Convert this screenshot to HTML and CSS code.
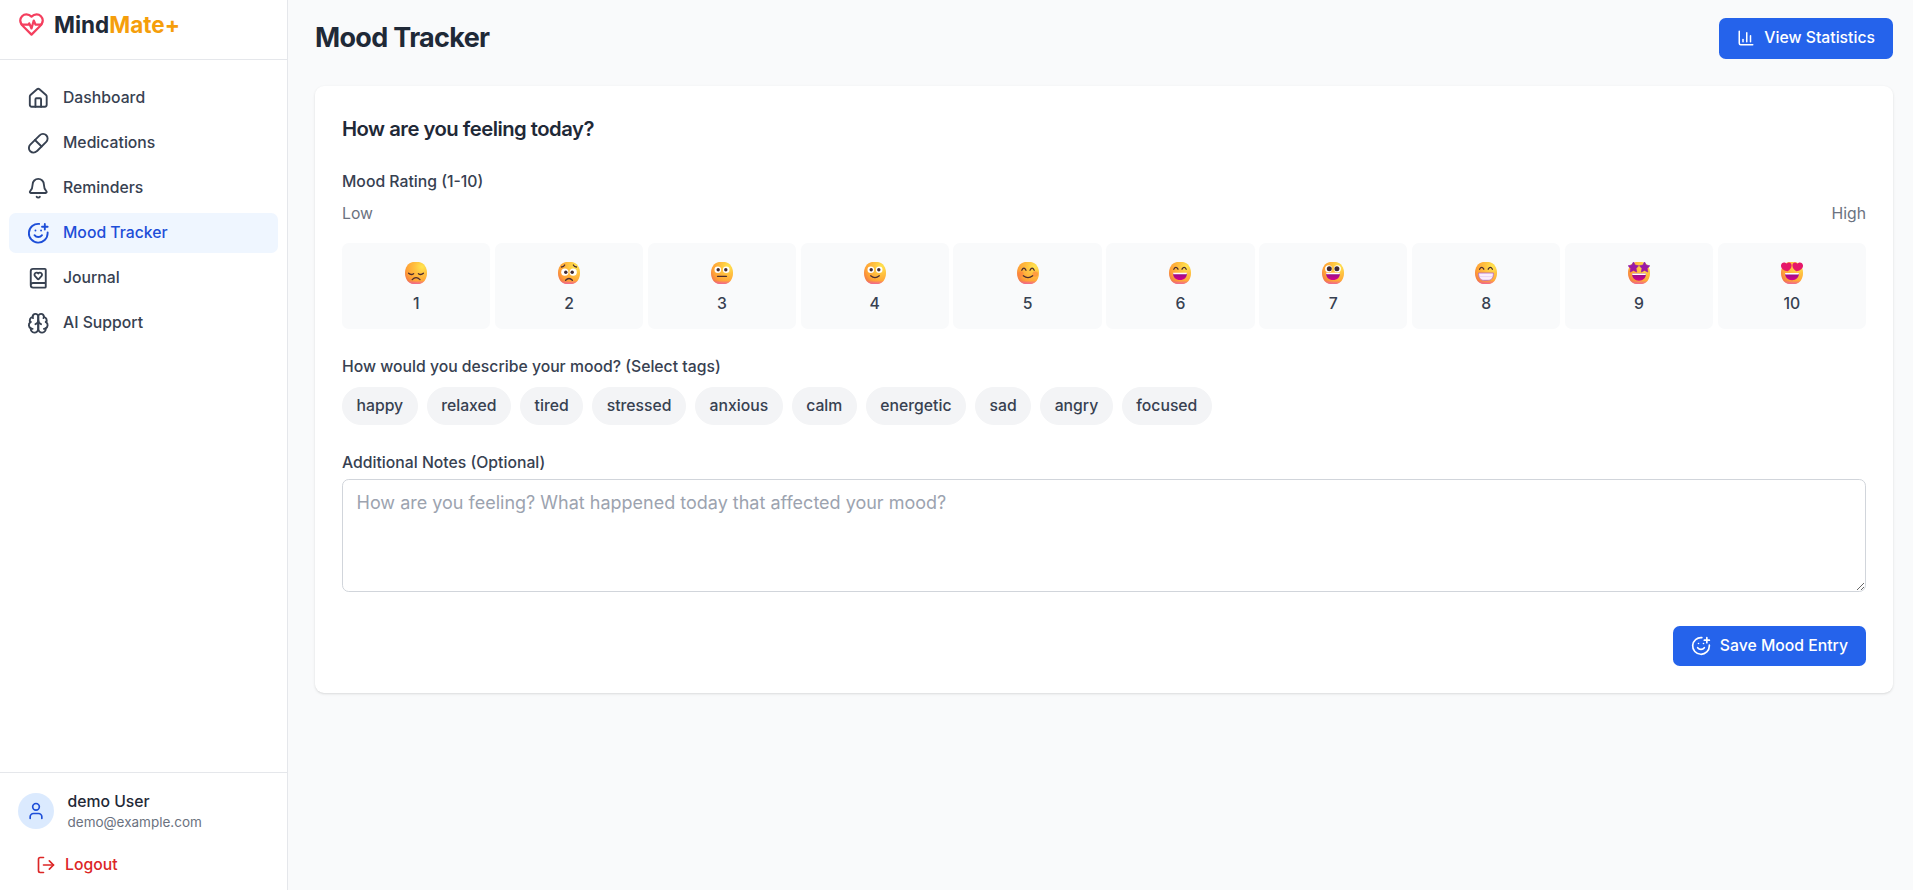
FILE: index.html
```html
<!DOCTYPE html>
<html lang="en">
<head>
<meta charset="utf-8">
<title>MindMate+</title>
<link rel="stylesheet" href="styles.css">
</head>
<body>
<svg class="defs" aria-hidden="true">
  <defs>
    <radialGradient id="skin" cx="0.78" cy="0.22" r="0.95">
      <stop offset="0" stop-color="#ffe550"/>
      <stop offset="0.35" stop-color="#ffc240"/>
      <stop offset="0.75" stop-color="#ffa136"/>
      <stop offset="1" stop-color="#f0724a"/>
    </radialGradient>
    <linearGradient id="blush" x1="0" y1="0" x2="0" y2="1">
      <stop offset="0.84" stop-color="#f0649c" stop-opacity="0"/>
      <stop offset="1" stop-color="#f0649c" stop-opacity="0.9"/>
    </linearGradient>
    <linearGradient id="mouth" x1="0" y1="0" x2="0" y2="1">
      <stop offset="0" stop-color="#8a1288"/>
      <stop offset="1" stop-color="#d8008c"/>
    </linearGradient>
    <linearGradient id="star" x1="0" y1="0" x2="0" y2="1">
      <stop offset="0" stop-color="#8c1fb0"/>
      <stop offset="1" stop-color="#a8129a"/>
    </linearGradient>
    <symbol id="face" viewBox="0 0 22 22">
      <path d="M8 0h6c5 1 8 5 8 11s-3 10-8 11H8c-5-1-8-5-8-11S3 1 8 0z" fill="url(#skin)"/>
      <path d="M8 0h6c5 1 8 5 8 11s-3 10-8 11H8c-5-1-8-5-8-11S3 1 8 0z" fill="url(#blush)"/>
    </symbol>
    <symbol id="smile-plus" viewBox="0 0 24 24">
      <path d="M22 11v1a10 10 0 1 1-9-10"/><path d="M8 14s1.500 2 4 2 4-2 4-2"/><path d="M9 9h.01"/><path d="M15 9h.01"/><path d="M16 5h6"/><path d="M19 2v6"/>
    </symbol>
  </defs>
</svg>
<div class="app">
  <aside class="sidebar">
    <div class="brand">
      <svg class="icon brand-icon" viewBox="0 0 24 24"><path d="M19 14c1.490-1.460 3-3.210 3-5.500A5.500 5.500 0 0 0 16.500 3c-1.760 0-3 .5-4.500 2-1.500-1.500-2.740-2-4.500-2A5.500 5.500 0 0 0 2 8.500c0 2.300 1.500 4.050 3 5.500l7 7Z"/><path d="M3.220 12H9.500l.5-1 2 4.500 2-7 1.500 3.500h5.270"/></svg>
      <span class="brand-name">Mind<span class="brand-accent">Mate+</span></span>
    </div>
    <nav class="nav">
      <a class="nav-item"><svg class="icon" viewBox="0 0 24 24"><path d="M15 21v-8a1 1 0 0 0-1-1h-4a1 1 0 0 0-1 1v8"/><path d="M3 10a2 2 0 0 1 .709-1.528l7-5.999a2 2 0 0 1 2.582 0l7 5.999A2 2 0 0 1 21 10v9a2 2 0 0 1-2 2H5a2 2 0 0 1-2-2z"/></svg>Dashboard</a>
      <a class="nav-item"><svg class="icon" viewBox="0 0 24 24"><path d="m10.500 20.500 10-10a4.950 4.950 0 1 0-7-7l-10 10a4.950 4.950 0 1 0 7 7Z"/><path d="m8.500 8.500 7 7"/></svg>Medications</a>
      <a class="nav-item"><svg class="icon" viewBox="0 0 24 24"><path d="M10.268 21a2 2 0 0 0 3.464 0"/><path d="M3.262 15.326A1 1 0 0 0 4 17h16a1 1 0 0 0 .74-1.673C19.410 13.956 18 12.499 18 8A6 6 0 0 0 6 8c0 4.499-1.411 5.956-2.738 7.326"/></svg>Reminders</a>
      <a class="nav-item active"><svg class="icon"><use href="#smile-plus"/></svg>Mood Tracker</a>
      <a class="nav-item"><svg class="icon" viewBox="0 0 24 24"><path d="M4 19.500v-15A2.500 2.500 0 0 1 6.500 2H19a1 1 0 0 1 1 1v18a1 1 0 0 1-1 1H6.500a1 1 0 0 1 0-5H20"/><path d="M8.620 9.800A2.250 2.250 0 1 1 12 6.836a2.250 2.250 0 1 1 3.380 2.966l-2.626 2.856a1 1 0 0 1-1.507 0z"/></svg>Journal</a>
      <a class="nav-item"><svg class="icon" viewBox="0 0 24 24"><path d="M12 5a3 3 0 1 0-5.997.125 4 4 0 0 0-2.526 5.770 4 4 0 0 0 .556 6.588A4 4 0 1 0 12 18Z"/><path d="M12 5a3 3 0 1 1 5.997.125 4 4 0 0 1 2.526 5.770 4 4 0 0 1-.556 6.588A4 4 0 1 1 12 18Z"/><path d="M15 13a4.500 4.500 0 0 1-3-4 4.500 4.500 0 0 1-3 4"/><path d="M17.599 6.500a3 3 0 0 0 .399-1.375"/><path d="M6.003 5.125A3 3 0 0 0 6.401 6.500"/><path d="M3.477 10.896a4 4 0 0 1 .585-.396"/><path d="M19.938 10.500a4 4 0 0 1 .585.396"/><path d="M6 18a4 4 0 0 1-1.967-.516"/><path d="M19.967 17.484A4 4 0 0 1 18 18"/></svg>AI Support</a>
    </nav>
    <div class="account">
      <div class="user">
        <span class="avatar"><svg class="icon icon-20" viewBox="0 0 24 24"><path d="M19 21v-2a4 4 0 0 0-4-4H9a4 4 0 0 0-4 4v2"/><circle cx="12" cy="7" r="4"/></svg></span>
        <div class="user-text"><p class="user-name">demo User</p><p class="user-mail">demo@example.com</p></div>
      </div>
      <button class="logout"><svg class="icon icon-20" viewBox="0 0 24 24"><path d="M9 21H5a2 2 0 0 1-2-2V5a2 2 0 0 1 2-2h4"/><path d="m16 17 5-5-5-5"/><path d="M21 12H9"/></svg>Logout</button>
    </div>
  </aside>

  <main class="main">
    <header class="page-head">
      <h1>Mood Tracker</h1>
      <button class="btn"><svg class="icon icon-18" viewBox="0 0 24 24"><path d="M3 3v16a2 2 0 0 0 2 2h16"/><path d="M18 17V9"/><path d="M13 17V5"/><path d="M8 17v-3"/></svg>View Statistics</button>
    </header>

    <section class="card">
      <h2>How are you feeling today?</h2>

      <div class="label">Mood Rating (1-10)</div>
      <div class="scale"><span>Low</span><span>High</span></div>
      <div class="ratings">
        <button class="rating"><span class="emoji"><svg viewBox="0 0 22 22"><use href="#face"/><g class="line"><path d="M3.600 11.200q2.400 2.300 5 .5M13.400 11.700q2.600 1.800 5-.5"/><path d="M7.200 17.600q3.800-4 7.800 0"/></g></svg></span>1</button>
        <button class="rating"><span class="emoji"><svg viewBox="0 0 22 22"><use href="#face"/><circle cx="6.800" cy="10.200" r="3.600" fill="#fff"/><circle cx="15.200" cy="10.200" r="3.600" fill="#fff"/><circle cx="7.800" cy="10.200" r="1.700" fill="#402a32"/><circle cx="14.200" cy="10.200" r="1.700" fill="#402a32"/><g class="line"><path d="M3.500 5q2.200-.2 3.200-2M18.500 5q-2.200-.2-3.200-2"/><path d="M7.600 18.300q3.400-3.600 6.800 0"/></g></svg></span>2</button>
        <button class="rating"><span class="emoji"><svg viewBox="0 0 22 22"><use href="#face"/><circle cx="6.800" cy="7.800" r="3.300" fill="#fff"/><circle cx="15.200" cy="7.800" r="3.300" fill="#fff"/><circle cx="7.200" cy="7.800" r="1.700" fill="#402a32"/><circle cx="14.800" cy="7.800" r="1.700" fill="#402a32"/><path class="line" d="M6.500 14.300h9"/></svg></span>3</button>
        <button class="rating"><span class="emoji"><svg viewBox="0 0 22 22"><use href="#face"/><circle cx="6.800" cy="7.800" r="3.300" fill="#fff"/><circle cx="15.200" cy="7.800" r="3.300" fill="#fff"/><circle cx="7.200" cy="7.800" r="1.700" fill="#402a32"/><circle cx="14.800" cy="7.800" r="1.700" fill="#402a32"/><path class="line" d="M6.700 13.800q4.300 3.600 8.600 0"/></svg></span>4</button>
        <button class="rating"><span class="emoji"><svg viewBox="0 0 22 22"><use href="#face"/><circle cx="3.800" cy="12" r="2.800" fill="#ff7043" opacity=".45"/><circle cx="18.200" cy="12" r="2.800" fill="#ff7043" opacity=".45"/><g class="line"><path d="M4.800 8.200q2-4 4.200 0M13 8.200q2.200-4 4.200 0"/><path d="M6.300 13.800q4.700 3.800 9.400 0"/></g></svg></span>5</button>
        <button class="rating"><span class="emoji"><svg viewBox="0 0 22 22"><use href="#face"/><path class="line" d="M4.800 7.200q2-3.600 4.200 0M13 7.200q2.200-3.600 4.200 0"/><path d="M4 11h14c0 4.500-2.800 7-7 7s-7-2.500-7-7z" fill="url(#mouth)"/><path d="M4 10.800h14l-.4 1.400H4.400z" fill="#fff"/></svg></span>6</button>
        <button class="rating"><span class="emoji"><svg viewBox="0 0 22 22"><use href="#face"/><circle cx="6.600" cy="6.800" r="3.500" fill="#fff"/><circle cx="15.400" cy="6.800" r="3.500" fill="#fff"/><circle cx="7.300" cy="6.800" r="2.500" fill="#402a32"/><circle cx="14.900" cy="6.800" r="2.500" fill="#402a32"/><path d="M4 11h14c0 4.500-2.800 7-7 7s-7-2.500-7-7z" fill="url(#mouth)"/><path d="M4 10.800h14l-.4 1.400H4.400z" fill="#fff"/></svg></span>7</button>
        <button class="rating"><span class="emoji"><svg viewBox="0 0 22 22"><use href="#face"/><path class="line" d="M4.600 7.200q2-3.600 4.200 0M13.200 7.200q2.200-3.600 4.200 0"/><path d="M3.600 11h14.800c.2 4.500-1.900 7.300-5 7.300H8.600c-3.100 0-5.200-2.800-5-7.300z" fill="#fbeefb" stroke="#b05fc4" stroke-width=".8"/><path d="M4.500 14.600h13" stroke="#dfc5ee" stroke-width=".7"/></svg></span>8</button>
        <button class="rating"><span class="emoji"><svg viewBox="0 0 22 22"><use href="#face"/><path d="M5.500-.2l1.600 3.300 3.500.6-2.500 2.700.6 3.700-3.200-1.700-3.300 1.700.5-3.700L.1 3.700l3.700-.6zM16.500-.2l1.700 3.300 3.700.6-2.600 2.700.5 3.700-3.300-1.700-3.200 1.700.6-3.700-2.500-2.700 3.500-.6z" fill="url(#star)" stroke="#9419a6" stroke-width=".6"/><path d="M4 11.600h14c0 4.500-2.800 7.200-7 7.200s-7-2.700-7-7.200z" fill="url(#mouth)"/><path d="M4 11.600h14l-.4 1.400H4.400z" fill="#fff"/></svg></span>9</button>
        <button class="rating"><span class="emoji"><svg viewBox="0 0 22 22"><use href="#face"/><path d="M6.800 9.200C3 8.800-.2 6.500 0 3.400.2.400 3.800-.6 5.600 1.800 7.200-.2 10.400.4 10.600 3.200 10.700 5.600 9 7.600 6.800 9.200zM15.200 9.200C19 8.800 22.200 6.500 22 3.400 21.800.4 18.200-.6 16.400 1.800 14.800-.2 11.600.4 11.400 3.200 11.300 5.600 13 7.600 15.200 9.200z" fill="#e6186a"/><path d="M4 11h14c0 4.500-2.800 7.200-7 7.200s-7-2.700-7-7.200z" fill="url(#mouth)"/><path d="M4 11h14l-.4 1.400H4.400z" fill="#fff"/></svg></span>10</button>
      </div>

      <div class="label">How would you describe your mood? (Select tags)</div>
      <div class="tags">
        <button class="tag">happy</button><button class="tag">relaxed</button><button class="tag">tired</button><button class="tag">stressed</button><button class="tag">anxious</button><button class="tag">calm</button><button class="tag">energetic</button><button class="tag">sad</button><button class="tag">angry</button><button class="tag">focused</button>
      </div>

      <label class="label notes-label" for="notes">Additional Notes (Optional)</label>
      <textarea id="notes" class="notes" placeholder="How are you feeling? What happened today that affected your mood?"></textarea>

      <div class="actions">
        <button class="btn"><svg class="icon icon-20"><use href="#smile-plus"/></svg>Save Mood Entry</button>
      </div>
    </section>
  </main>
</div>
</body>
</html>
```
FILE: styles.css
```css
html { font-size: 18px; }
*, *::before, *::after { box-sizing: border-box; margin: 0; padding: 0; }
body {
  font-family: Inter, "Liberation Sans", sans-serif;
  line-height: 1.5;
  color: #1f2937;
  background: #f9fafb;
}
button { font: inherit; color: inherit; border: 0; background: none; }
.defs { position: absolute; width: 0; height: 0; }

.icon {
  flex: none;
  width: 1.25rem;
  height: 1.25rem;
  fill: none;
  stroke: currentColor;
  stroke-width: 2;
  stroke-linecap: round;
  stroke-linejoin: round;
}
.icon-20 { width: 20px; height: 20px; }
.icon-18 { width: 18px; height: 18px; }

.app { display: flex; height: 100vh; }

.sidebar {
  display: flex;
  flex-direction: column;
  flex: none;
  width: 16rem;
  background: #fff;
  border-right: 1px solid #e5e7eb;
}
.brand {
  display: flex;
  align-items: center;
  gap: 0.5rem;
  padding: 0.5rem 1rem 1rem;
  border-bottom: 1px solid #e5e7eb;
}
.brand-icon { width: 1.5rem; height: 1.5rem; color: #f43f5e; }
.brand-name { font-size: 1.25rem; line-height: 1.75rem; font-weight: 700; }
.brand-accent { color: #f59e0b; }

.nav {
  display: flex;
  flex-direction: column;
  flex: 1;
  gap: 0.25rem;
  padding: 1rem 0.5rem;
}
.nav-item {
  display: flex;
  align-items: center;
  gap: 0.75rem;
  padding: 0.5rem 1rem;
  border-radius: 0.375rem;
  font-size: 0.875rem;
  line-height: 1.25rem;
  font-weight: 500;
  color: #374151;
}
.nav-item.active { background: #eff6ff; color: #1d4ed8; }

.account { padding: 1rem; border-top: 1px solid #e5e7eb; }
.user { display: flex; align-items: center; gap: 0.75rem; margin-bottom: 0.75rem; }
.avatar {
  display: flex;
  align-items: center;
  justify-content: center;
  width: 2rem;
  height: 2rem;
  border-radius: 50%;
  background: #dbeafe;
  color: #1d4ed8;
}
.user-name { font-size: 0.875rem; line-height: 1.25rem; font-weight: 500; }
.user-mail { margin-top: -1px; padding-bottom: 1px; font-size: 0.75rem; line-height: 1rem; color: #6b7280; }
.logout {
  display: flex;
  align-items: center;
  gap: 0.5rem;
  padding: 0.5rem 1rem;
  margin-bottom: -13.5px;
  font-size: 0.875rem;
  line-height: 1.25rem;
  font-weight: 500;
  color: #dc2626;
}

.main { flex: 1; min-width: 0; padding: 1rem 20px 1rem 1.5rem; }
.page-head {
  display: flex;
  align-items: center;
  justify-content: space-between;
  margin-bottom: 1.5rem;
}
h1 { font-size: 1.5rem; line-height: 2rem; font-weight: 700; letter-spacing: -0.025em; }
.btn {
  display: flex;
  align-items: center;
  gap: 0.5rem;
  padding: 0.5rem 1rem;
  border-radius: 0.375rem;
  background: #2563eb;
  color: #fff;
  font-size: 0.875rem;
  line-height: 1.25rem;
  font-weight: 500;
}

.card {
  padding: 1.5rem;
  border-radius: 0.5rem;
  background: #fff;
  box-shadow: 0 1px 3px rgba(0, 0, 0, 0.1), 0 1px 2px -1px rgba(0, 0, 0, 0.1);
}
h2 {
  margin-bottom: 1.5rem;
  font-size: 1.125rem;
  line-height: 1.75rem;
  font-weight: 600;
  letter-spacing: -0.025em;
}
.label {
  display: block;
  margin-bottom: 0.5rem;
  font-size: 0.875rem;
  line-height: 1.25rem;
  font-weight: 500;
  color: #374151;
}
.scale {
  display: flex;
  justify-content: space-between;
  margin-bottom: 1rem;
  font-size: 0.875rem;
  line-height: 1.25rem;
  color: #6b7280;
}
.ratings {
  display: grid;
  grid-template-columns: repeat(10, 1fr);
  gap: 0.25rem;
  margin-bottom: 1.5rem;
}
.rating {
  display: flex;
  flex-direction: column;
  align-items: center;
  padding: 0.75rem;
  border-radius: 0.375rem;
  background: #f9fafb;
  font-size: 0.875rem;
  line-height: 1.25rem;
  font-weight: 500;
  color: #374151;
}
.emoji { display: flex; align-items: center; height: 1.75rem; padding-top: 2px; margin-bottom: 0.25rem; }
.emoji svg { display: block; width: 22px; height: 22px; }
.line { fill: none; stroke: #4a2c30; stroke-width: 1.3; stroke-linecap: round; }

.tags { display: flex; flex-wrap: wrap; gap: 0.5rem; margin-bottom: 1.5rem; }
.tag {
  padding: 0.375rem 0.75rem;
  border: 1px solid #f3f4f6;
  border-radius: 999px;
  background: #f3f4f6;
  font-size: 0.875rem;
  line-height: 1.25rem;
  font-weight: 500;
  color: #374151;
}
.notes-label { margin-bottom: 0.25rem; }
.notes {
  display: block;
  width: 100%;
  height: 113px;
  margin-bottom: 33.5px;
  padding: 0.5rem 0.75rem;
  border: 1px solid #d1d5db;
  border-radius: 0.375rem;
  font: inherit;
  resize: vertical;
}
.notes::placeholder { color: #9ca3af; }
.actions { display: flex; justify-content: flex-end; }
```
